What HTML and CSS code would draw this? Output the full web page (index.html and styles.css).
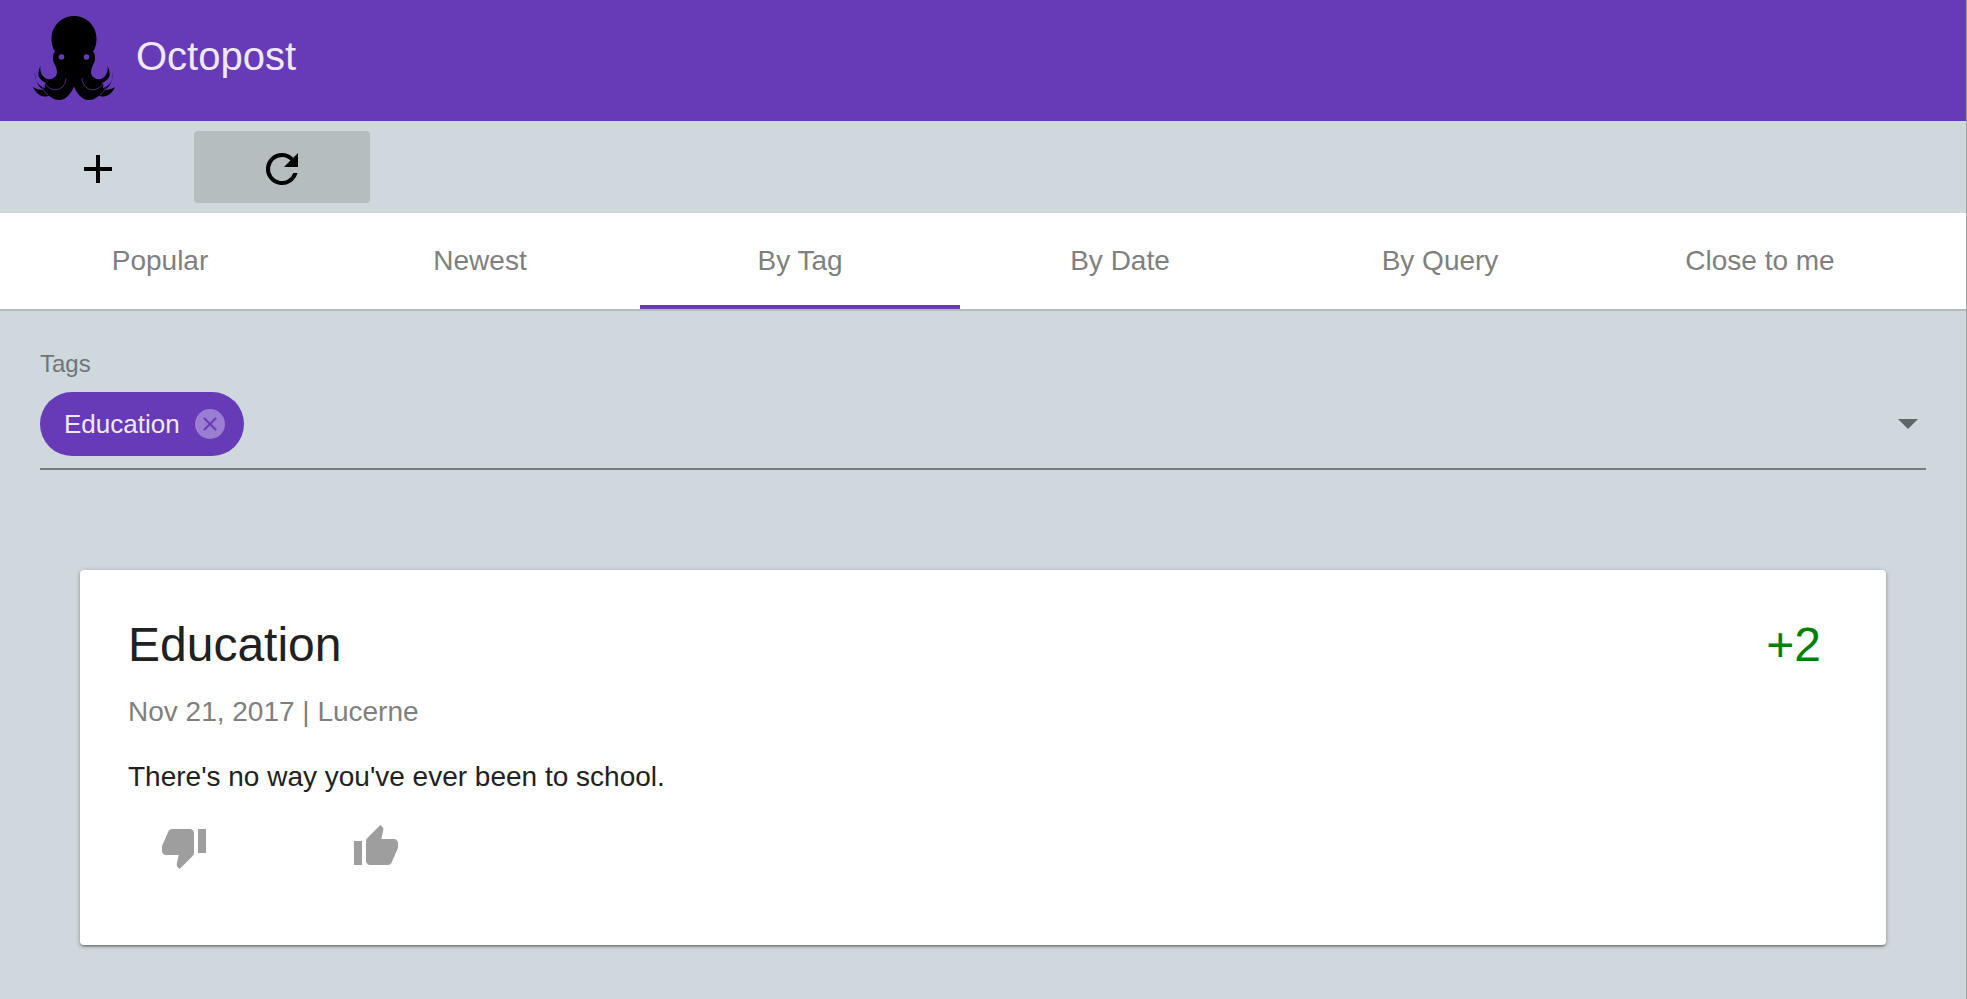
FILE: index.html
```html
<!DOCTYPE html>
<html lang="en">
<head>
<meta charset="utf-8">
<title>Octopost</title>
<link rel="stylesheet" href="styles.css">
</head>
<body>
<div class="page">
  <header class="appbar">
    <svg class="logo" viewBox="0 0 82 84" aria-hidden="true">
      <defs>
        <g id="octo-half">
          <path class="ink" d="M7.5 50C6.5 56 9 61 14 63C18 64 22 62 25 58L27 66C20 70 9 68 5.5 60C5 56 6 53 7.5 50Z"/>
          <path class="ink" d="M2 56C1 63 5 70 12 72C16 73 20 72 23 70L22 75C16 77 10 75 6 70C3 66 2 61 2 56Z"/>
          <path class="ink" d="M0 71C5 74 9 75 14 72L17 79C12 82 7 80 4 77C2 75 1 73 0 71Z"/>
          <path class="ink" d="M41 0C28.5 0 18.5 10 18.5 22.5C18.5 28 19.5 32 22 35.5C19.5 38 19.5 44 21 47C23 50 24 54 24 57C22 64 17 67 12 67C11 72 13 77 17 80.5C20 83 23 84 26 84C34 84 39 76 42 68L42 0Z"/>
          <path class="octo-line" d="M12 67C15 73 22 76 28 72C31 70 33 66 33 62"/>
          <path class="octo-line" d="M15 79C12 77 10 74 9.5 71"/>
        </g>
      </defs>
      <use href="#octo-half"/>
      <use href="#octo-half" transform="matrix(-1 0 0 1 82 0)"/>
      <circle class="eye" cx="28.5" cy="41" r="2.8"/>
      <circle class="eye" cx="53.5" cy="41" r="2.8"/>
    </svg>
    <span class="brand">Octopost</span>
  </header>
  <div class="toolbar">
    <button class="tool" type="button" aria-label="Add">
      <svg class="tool-icon" viewBox="0 0 28 28"><path class="plus" d="M14 0V28M0 14H28"/></svg>
    </button>
    <button class="tool tool-active" type="button" aria-label="Refresh">
      <svg class="refresh-icon" viewBox="0 0 24 24"><path class="ink" d="M17.65 6.35A7.96 7.96 0 0 0 12 4a8 8 0 1 0 7.73 10h-2.08A6 6 0 1 1 12 6c1.66 0 3.14.69 4.22 1.78L13 11h7V4z"/></svg>
    </button>
  </div>
  <nav class="tabs">
    <a class="tab">Popular</a>
    <a class="tab">Newest</a>
    <a class="tab tab-active">By Tag</a>
    <a class="tab">By Date</a>
    <a class="tab">By Query</a>
    <a class="tab">Close to me</a>
  </nav>
  <main class="content">
    <section class="field">
      <div class="field-label">Tags</div>
      <div class="select">
        <span class="chip">Education
          <svg class="chip-x" viewBox="0 0 30 30"><circle class="chip-disc" cx="15" cy="15" r="15"/><path class="chip-cross" d="M9 9L21 21M21 9L9 21"/></svg>
        </span>
        <span class="caret"></span>
      </div>
    </section>
    <article class="card">
      <div class="card-head">
        <h2 class="card-title">Education</h2>
        <span class="score">+2</span>
      </div>
      <p class="meta">Nov 21, 2017 | Lucerne</p>
      <p class="body">There's no way you've ever been to school.</p>
      <div class="votes">
        <button class="vote" type="button" aria-label="Downvote">
          <svg class="vote-icon" viewBox="0 0 24 24"><path d="M15 3H6c-.83 0-1.54.5-1.84 1.22l-3.02 7.05c-.09.23-.14.47-.14.73v2c0 1.1.9 2 2 2h6.31l-.95 4.57-.03.32c0 .41.17.79.44 1.06L9.83 23l6.59-6.59c.36-.36.58-.86.58-1.41V5c0-1.1-.9-2-2-2zm4 0v12h4V3h-4z"/></svg>
        </button>
        <button class="vote" type="button" aria-label="Upvote">
          <svg class="vote-icon" viewBox="0 0 24 24"><path d="M1 21h4V9H1v12zm22-11c0-1.1-.9-2-2-2h-6.31l.95-4.57.03-.32c0-.41-.17-.79-.44-1.06L14.17 1 7.58 7.59C7.22 7.95 7 8.45 7 9v10c0 1.1.9 2 2 2h9c.83 0 1.54-.5 1.84-1.22l3.02-7.05c.09-.23.14-.47.14-.73v-2z"/></svg>
        </button>
      </div>
    </article>
  </main>
</div>
</body>
</html>
```
FILE: styles.css
```css
html, body { margin: 0; padding: 0; height: 100%; overflow: hidden; }
body { background: #cfd8dc; font-family: "Liberation Sans", Arial, sans-serif; }
.page { height: 999px; box-sizing: border-box; border-right: 1px solid #9a9fa2; background: #cfd8dc; }
.appbar { height: 121px; background: #673ab7; display: flex; align-items: flex-start; padding-left: 33px; box-sizing: border-box; }
.logo { width: 82px; height: 84px; margin-top: 16px; flex: none; }
.ink { fill: #000; }
.octo-line { fill: none; stroke: #673ab7; stroke-width: 0.7; }
.eye { fill: #673ab7; }
.brand { color: #efe9f7; font-size: 40px; line-height: 44px; margin: 34px 0 0 21px; }
.toolbar { height: 92px; display: flex; align-items: flex-start; padding: 10px 0 0 18px; box-sizing: border-box; }
.tool { width: 160px; height: 72px; margin-right: 16px; border: 0; border-radius: 4px; background: transparent; display: flex; align-items: center; justify-content: center; padding: 4px 0 0; box-sizing: border-box; }
.tool + .tool { width: 176px; }
.tool-active { background: #b5bdbf; }
.tool-icon { width: 28px; height: 28px; }
.plus { stroke: #000; stroke-width: 4; fill: none; }
.refresh-icon { width: 48px; height: 48px; }
.tabs { height: 98px; display: flex; background: #fff; border-bottom: 2px solid #b5bdbf; box-sizing: border-box; }
.tab { width: 320px; height: 96px; display: flex; align-items: center; justify-content: center; font-size: 28px; color: #7f7f7f; box-sizing: border-box; }
.tab-active { border-bottom: 4px solid #673ab7; padding-top: 4px; }
.content { padding: 40px 40px 0; }
.field { margin-bottom: 100px; }
.field-label { font-size: 24px; line-height: 26px; color: #6f7577; }
.select { margin-top: 15px; height: 78px; box-sizing: border-box; border-bottom: 2px solid #767b7c; display: flex; align-items: flex-start; justify-content: space-between; }
.chip { height: 64px; width: 204px; box-sizing: border-box; border-radius: 32px; background: #673ab7; color: #efe9f7; font-size: 26px; display: flex; align-items: center; padding-left: 24px; }
.chip-x { width: 30px; height: 30px; margin-left: 15px; }
.chip-disc { fill: #9b7dd1; }
.chip-cross { stroke: #673ab7; stroke-width: 2; fill: none; }
.caret { width: 0; height: 0; border-left: 10px solid transparent; border-right: 10px solid transparent; border-top: 10px solid #5f6568; margin: 27px 8px 0 0; }
.card { margin: 0 40px; height: 375px; box-sizing: border-box; background: #fff; border-radius: 4px; padding: 48px 48px 0; box-shadow: 0 1px 5px 0 rgba(0,0,0,.25), 0 2px 2px 0 rgba(0,0,0,.2), 0 3px 1px -2px rgba(0,0,0,.15); }
.card-head { display: flex; justify-content: space-between; align-items: center; padding-right: 17px; }
.card-title { margin: 0; font-size: 48px; line-height: 54px; font-weight: 400; color: #212121; }
.score { font-size: 48px; line-height: 54px; color: #008000; }
.meta { margin: 24px 0 0; font-size: 28px; line-height: 32px; color: #7f7f7f; }
.body { margin: 33px 0 0; font-size: 28px; line-height: 32px; color: #212121; }
.votes { display: flex; margin-top: 30px; padding-left: 32px; }
.vote { width: 48px; height: 48px; padding: 0; border: 0; background: transparent; margin-right: 144px; }
.vote-icon { width: 48px; height: 48px; fill: #9e9e9e; display: block; }
```
